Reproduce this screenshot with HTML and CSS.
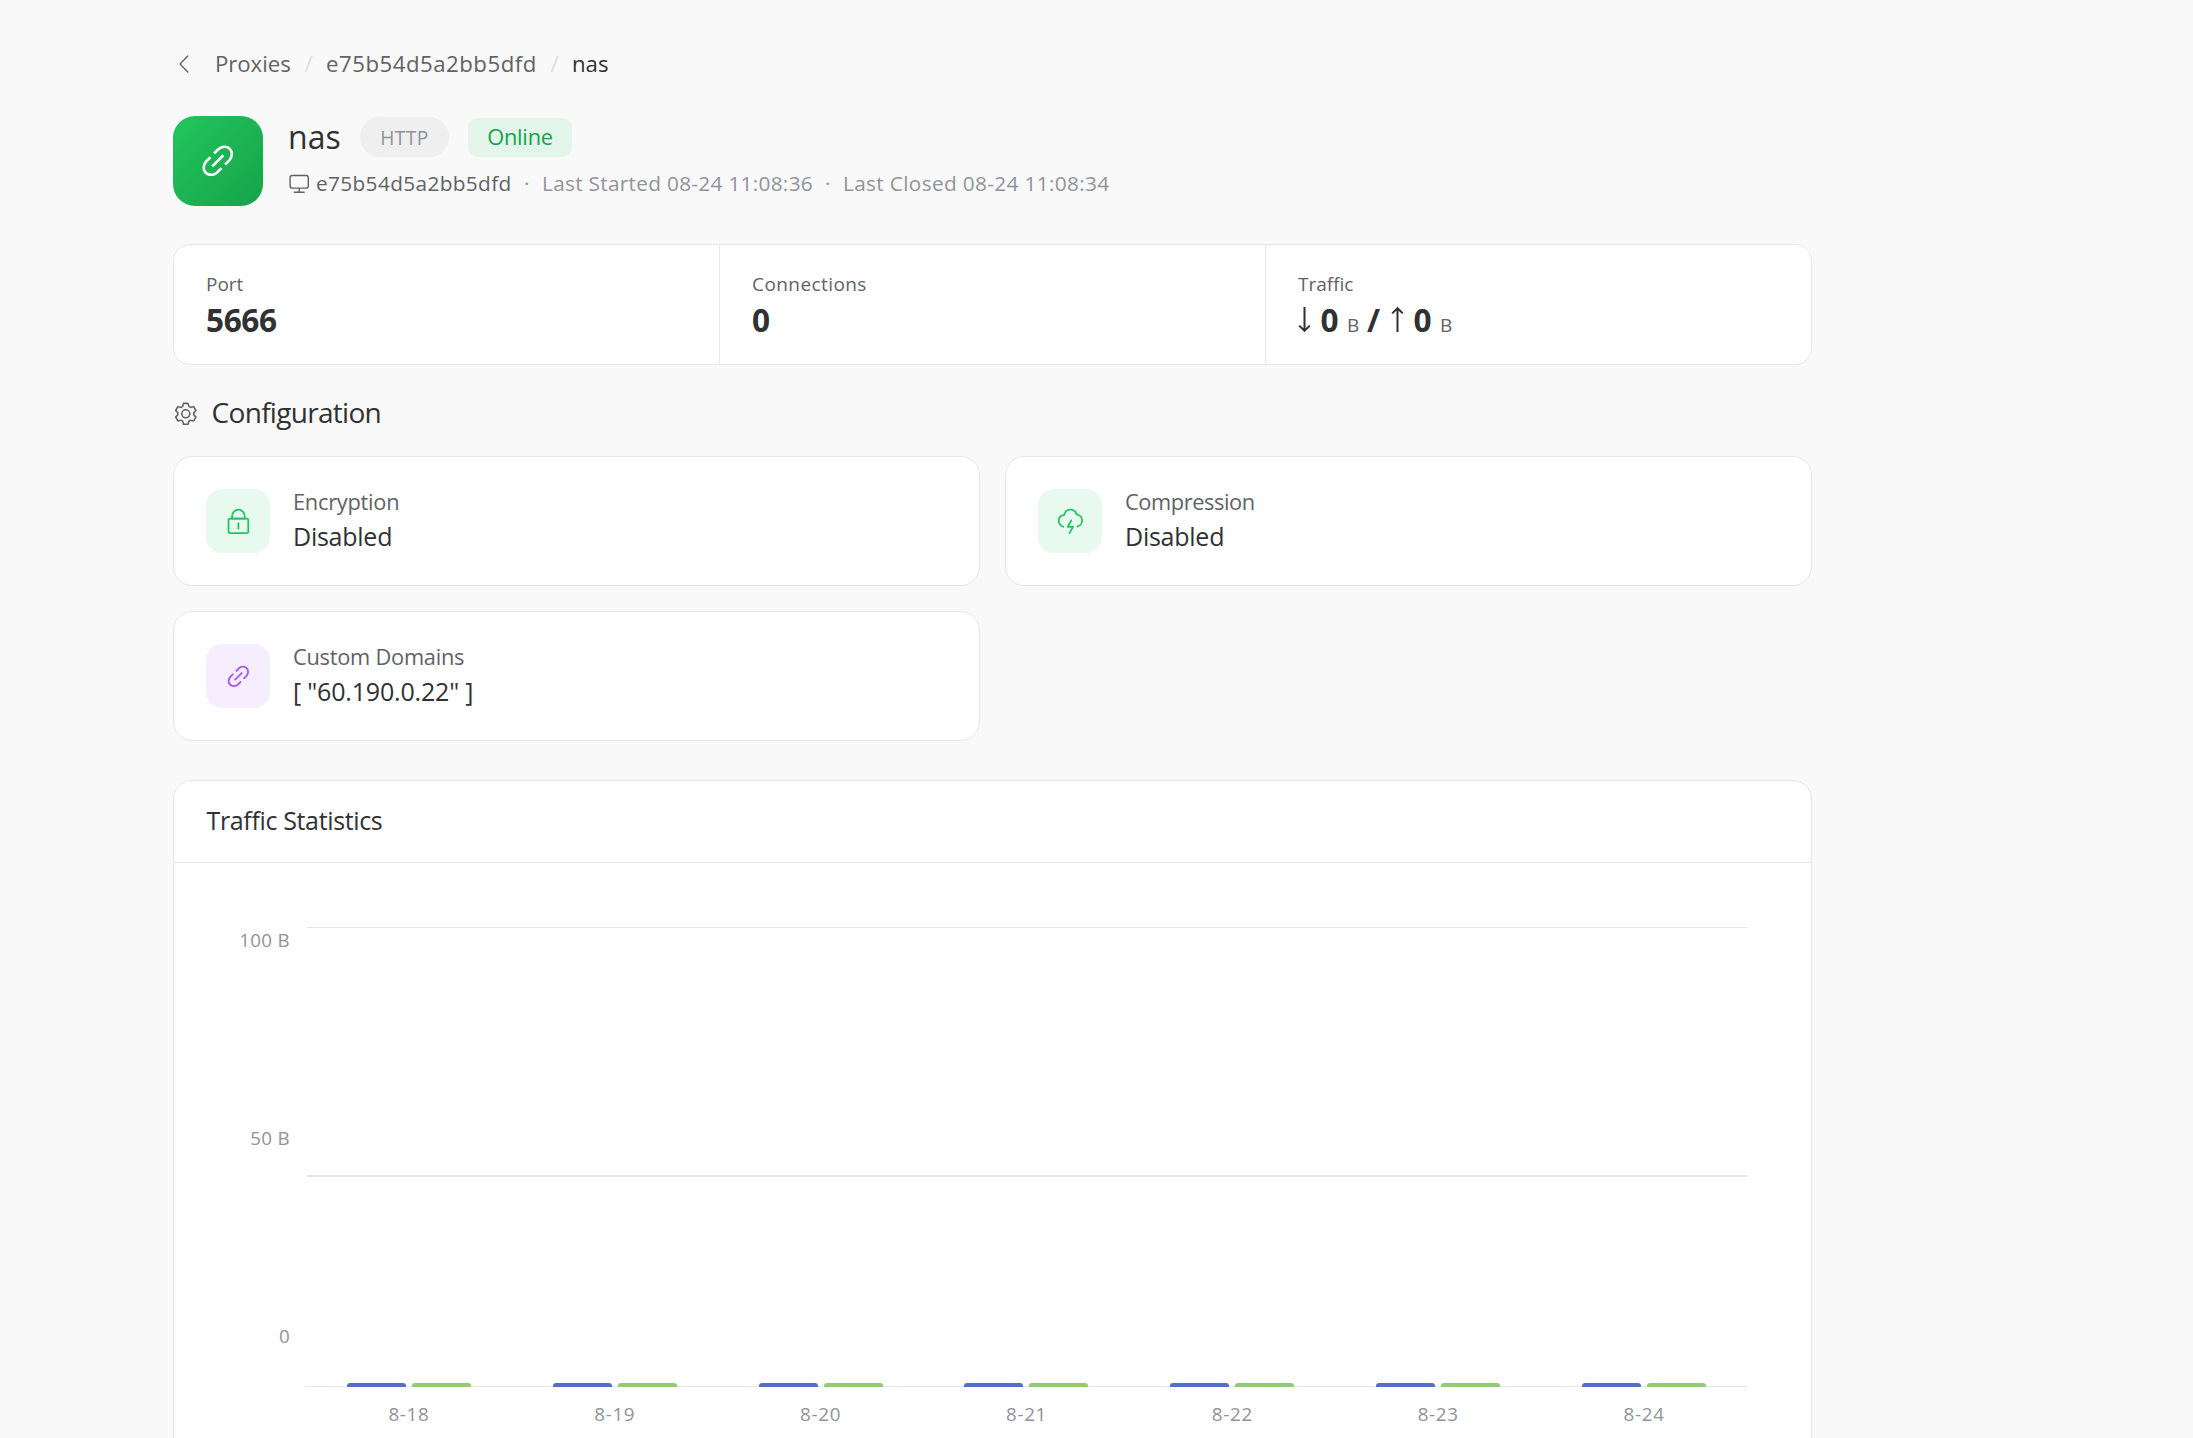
FILE: index.html
```html
<!DOCTYPE html>
<html lang="en">
<head>
<meta charset="utf-8">
<title>nas</title>
<link rel="stylesheet" href="styles.css">
</head>
<body>
<svg class="sprite" width="0" height="0">
  <symbol id="link" viewBox="0 0 1024 1024"><path d="M715.648 625.152 670.4 579.904l90.496-90.56c75.008-74.944 85.12-186.368 22.656-248.896-62.528-62.464-173.952-52.352-248.96 22.656L444.16 353.6l-45.248-45.248 90.496-90.496c100.032-99.968 251.968-110.08 339.456-22.656 87.488 87.488 77.312 239.424-22.656 339.456l-90.496 90.496zm-90.496 90.496-90.496 90.496C434.624 906.112 282.688 916.224 195.2 828.8c-87.488-87.488-77.312-239.424 22.656-339.456l90.496-90.496 45.248 45.248-90.496 90.56c-75.008 74.944-85.12 186.368-22.656 248.896 62.528 62.464 173.952 52.352 248.96-22.656l90.496-90.496zm0-362.048 45.248 45.248L398.848 670.4 353.6 625.152z"/></symbol>
</svg>
<main class="page">
  <nav class="crumbs">
    <svg class="back" viewBox="0 0 1024 1024"><path d="M609.408 149.376 277.76 489.6a32 32 0 0 0 0 44.672l331.648 340.352a29.12 29.12 0 0 0 41.728 0 30.592 30.592 0 0 0 0-42.752L339.264 511.936l311.872-319.872a30.592 30.592 0 0 0 0-42.688 29.12 29.12 0 0 0-41.728 0"/></svg>
    <a class="crumb-root">Proxies</a>
    <span class="slash">/</span>
    <a class="crumb-id">e75b54d5a2bb5dfd</a>
    <span class="slash">/</span>
    <span class="current">nas</span>
  </nav>

  <header class="hero">
    <div class="hero-icon"><svg viewBox="0 0 1024 1024"><use href="#link"/></svg></div>
    <div class="hero-body">
      <div class="title-row">
        <h1>nas</h1>
        <span class="type">HTTP</span>
        <span class="status">Online</span>
      </div>
      <div class="meta">
        <svg viewBox="0 0 1024 1024"><path d="M544 768v128h192a32 32 0 1 1 0 64H288a32 32 0 1 1 0-64h192V768H192A128 128 0 0 1 64 640V256a128 128 0 0 1 128-128h640a128 128 0 0 1 128 128v384a128 128 0 0 1-128 128zM192 192a64 64 0 0 0-64 64v384a64 64 0 0 0 64 64h640a64 64 0 0 0 64-64V256a64 64 0 0 0-64-64z"/></svg>
        <span class="client">e75b54d5a2bb5dfd</span>
        <span class="dot">·</span>
        <span class="started">Last Started 08-24 11:08:36</span>
        <span class="dot">·</span>
        <span class="closed">Last Closed 08-24 11:08:34</span>
      </div>
    </div>
  </header>

  <section class="stats">
    <div class="stat"><div class="label">Port</div><div class="value">5666</div></div>
    <div class="stat"><div class="label connections">Connections</div><div class="value">0</div></div>
    <div class="stat"><div class="label">Traffic</div>
      <div class="value traffic">
        <svg class="arrow" viewBox="0 0 13 25"><path d="M6.5 0V23.6M1.2 18.6 6.5 23.8 11.8 18.6"/></svg>
        <span class="num">0</span><span class="unit">B</span><span class="sep">/</span>
        <svg class="arrow" viewBox="0 0 13 25"><path d="M6.5 25V1.4M1.2 6.4 6.5 1.2 11.8 6.4"/></svg>
        <span class="num">0</span><span class="unit">B</span>
      </div>
    </div>
  </section>

  <h2 class="section-title">
    <svg viewBox="0 0 1024 1024"><path d="M600.704 64a32 32 0 0 1 30.464 22.208l35.2 109.376c14.784 7.232 28.928 15.36 42.432 24.512l112.384-24.192a32 32 0 0 1 34.432 15.36L944.32 364.8a32 32 0 0 1-4.032 37.504l-77.12 85.12a357.12 357.12 0 0 1 0 49.024l77.12 85.248a32 32 0 0 1 4.032 37.504l-88.704 153.6a32 32 0 0 1-34.432 15.296L708.8 803.904c-13.44 9.088-27.648 17.28-42.368 24.512l-35.264 109.376A32 32 0 0 1 600.704 960H423.296a32 32 0 0 1-30.464-22.208L357.696 828.48a351.616 351.616 0 0 1-42.56-24.64l-112.32 24.256a32 32 0 0 1-34.432-15.36L79.68 659.2a32 32 0 0 1 4.032-37.504l77.12-85.248a357.12 357.12 0 0 1 0-48.896l-77.12-85.248A32 32 0 0 1 79.68 364.8l88.704-153.6a32 32 0 0 1 34.432-15.296l112.32 24.256c13.568-9.152 27.776-17.408 42.56-24.64l35.2-109.312A32 32 0 0 1 423.232 64H600.64zm-23.424 64H446.72l-36.352 113.088-24.512 11.968a294.113 294.113 0 0 0-34.816 20.096l-22.656 15.36-116.224-25.088-65.28 113.152 79.68 88.192-1.92 27.136a293.12 293.12 0 0 0 0 40.192l1.92 27.136-79.808 88.192 65.344 113.152 116.224-25.024 22.656 15.296a294.113 294.113 0 0 0 34.816 20.096l24.512 11.968L446.72 896h130.688l36.48-113.152 24.448-11.904a288.282 288.282 0 0 0 34.752-20.096l22.592-15.296 116.288 25.024 65.28-113.152-79.744-88.192 1.92-27.136a293.12 293.12 0 0 0 0-40.256l-1.92-27.136 79.808-88.128-65.344-113.152-116.288 24.96-22.592-15.232a287.616 287.616 0 0 0-34.752-20.096l-24.448-11.904L577.344 128zM512 320a192 192 0 1 1 0 384 192 192 0 0 1 0-384m0 64a128 128 0 1 0 0 256 128 128 0 0 0 0-256"/></svg>
    <span>Configuration</span>
  </h2>

  <section class="configs">
    <div class="config">
      <div class="tile green"><svg viewBox="0 0 1024 1024"><path d="M224 448a32 32 0 0 0-32 32v384a32 32 0 0 0 32 32h576a32 32 0 0 0 32-32V480a32 32 0 0 0-32-32zm0-64h576a96 96 0 0 1 96 96v384a96 96 0 0 1-96 96H224a96 96 0 0 1-96-96V480a96 96 0 0 1 96-96"/><path d="M512 544a32 32 0 0 1 32 32v192a32 32 0 1 1-64 0V576a32 32 0 0 1 32-32m192-160v-64a192 192 0 1 0-384 0v64zM512 64a256 256 0 0 1 256 256v128H256V320A256 256 0 0 1 512 64"/></svg></div>
      <div class="text"><div class="name">Encryption</div><div class="setting">Disabled</div></div>
    </div>
    <div class="config">
      <div class="tile green"><svg viewBox="0 0 1024 1024"><path d="M288 671.36v64.128A239.808 239.808 0 0 1 63.744 496.192a240.32 240.32 0 0 1 199.488-236.8 256.128 256.128 0 0 1 487.872-30.976A256.064 256.064 0 0 1 736 734.016v-64.768a192 192 0 0 0 3.328-377.92l-35.2-6.592-12.8-33.408a192.064 192.064 0 0 0-365.952 23.232l-9.92 40.896-41.472 7.04a176.32 176.32 0 0 0-146.24 173.568c0 91.968 70.464 167.36 160.256 175.232z"/><path d="M416 736a32 32 0 0 1-27.776-47.872l128-224a32 32 0 1 1 55.552 31.744L471.168 672H608a32 32 0 0 1 27.776 47.872l-128 224a32 32 0 1 1-55.68-31.744L552.96 736z"/></svg></div>
      <div class="text"><div class="name compression">Compression</div><div class="setting">Disabled</div></div>
    </div>
    <div class="config">
      <div class="tile purple"><svg viewBox="0 0 1024 1024"><use href="#link"/></svg></div>
      <div class="text"><div class="name">Custom Domains</div><div class="setting domains">[ "60.190.0.22" ]</div></div>
    </div>
  </section>

  <section class="chart-card">
    <h3>Traffic Statistics</h3>
    <div class="chart">
      <div class="y-axis"><span>100 B</span><span>50 B</span><span>0</span></div>
      <div class="plot">
        <div class="grid">
          <div class="band upper"></div>
          <div class="band lower">
            <div class="day"><i class="in"></i><i class="out"></i></div>
            <div class="day"><i class="in"></i><i class="out"></i></div>
            <div class="day"><i class="in"></i><i class="out"></i></div>
            <div class="day"><i class="in"></i><i class="out"></i></div>
            <div class="day"><i class="in"></i><i class="out"></i></div>
            <div class="day"><i class="in"></i><i class="out"></i></div>
            <div class="day"><i class="in"></i><i class="out"></i></div>
          </div>
        </div>
        <div class="x-axis"><span>8-18</span><span>8-19</span><span>8-20</span><span>8-21</span><span>8-22</span><span>8-23</span><span>8-24</span></div>
      </div>
    </div>
  </section>
</main>
</body>
</html>
```
FILE: styles.css
```css
* { box-sizing: border-box; }
html, body { height: 100%; }
body {
  margin: 0;
  overflow: hidden;
  background: #f9f9f9;
  color: #303133;
  font-family: "Open Sans", "Noto Sans", sans-serif;
  letter-spacing: -0.3px;
}
svg { display: block; flex: none; fill: currentColor; }
.sprite { position: absolute; }
h1, h2, h3 { margin: 0; font-weight: 400; }

.page { width: 1812px; padding: 48px 0 0 173px; }

.crumbs { display: flex; align-items: center; height: 32px; font-size: 22.2px; color: #606266; white-space: nowrap; }
.crumbs > :not(svg) { line-height: 32px; }
.back { width: 24px; height: 24px; margin-right: 18px; }
.crumb-root { width: 76px; letter-spacing: -0.05px; }
.slash { width: 35px; text-align: center; color: #dcdfe6; }
.crumb-id { width: 211px; letter-spacing: 0.52px; }
.current { color: #303133; letter-spacing: 0; }

.hero { display: flex; gap: 25px; margin-top: 36px; height: 90px; }
.hero-icon {
  display: grid; place-items: center;
  width: 90px; height: 90px; border-radius: 22px;
  background: linear-gradient(135deg, #22c55e, #16a34a);
  color: #fff;
}
.hero-icon svg { width: 41.6px; height: 41.6px; }
.title-row { display: flex; align-items: center; height: 42px; }
h1 { width: 72px; padding-bottom: 1px; font-size: 32px; line-height: 40px; letter-spacing: 0; }
.type {
  width: 89px; height: 40px; margin-right: 19px; border-radius: 20px;
  background: #efeff0; color: #909399;
  font-size: 19.2px; line-height: 41px; text-align: center; letter-spacing: 0.4px;
}
.status {
  width: 104px; height: 39px; border-radius: 9.6px;
  background: #e3f4ea; color: #16a34a;
  font-size: 21.8px; line-height: 38px; text-align: center; letter-spacing: -0.2px;
}
.meta { display: flex; align-items: center; height: 50px; font-size: 20.8px; color: #909399; white-space: nowrap; }
.meta > span { line-height: 28px; }
.meta svg { width: 22.4px; height: 22.4px; margin: 0 6px 0 -0.4px; }
.meta svg, .client { color: #606266; }
.client { width: 195px; letter-spacing: 0.36px; }
.dot { width: 31px; text-align: center; }
.started { width: 270px; letter-spacing: 0.29px; }
.closed { letter-spacing: 0.34px; }

.stats {
  display: grid; grid-template-columns: 545px 546px 1fr;
  height: 121px; margin-top: 38px;
  background: #fff; border: 1px solid #e4e7ed; border-radius: 16px;
}
.stat { padding: 26px 32px 0; }
.stat + .stat { border-left: 1px solid #e4e7ed; }
.label { font-size: 19px; line-height: 27px; letter-spacing: 0; color: #606266; }
.connections { letter-spacing: 0.42px; }
.value { font-size: 31.6px; line-height: 44px; font-weight: 700; letter-spacing: -0.4px; }
.traffic { display: flex; align-items: baseline; }
.arrow { width: 13px; height: 25px; margin-right: 9px; fill: none; stroke: currentColor; stroke-width: 2; }
.traffic .num { width: 27px; padding-left: 0.5px; }
.unit { width: 19px; font-size: 19px; font-weight: 400; color: #606266; }
.sep { width: 25px; padding-left: 1px; }

.section-title { display: flex; align-items: center; gap: 13px; height: 40px; margin-top: 29px; font-size: 28px; letter-spacing: -0.7px; }
.section-title svg { width: 25.6px; height: 25.6px; color: #606266; }
.section-title span { line-height: 37px; padding-bottom: 3px; }

.configs { display: grid; grid-template-columns: 1fr 1fr; grid-auto-rows: 130px; gap: 25px; margin-top: 22px; }
.config {
  display: flex; align-items: center; gap: 23px; padding: 0 32px;
  background: #fff; border: 1px solid #e4e7ed; border-radius: 19px;
}
.tile { display: grid; place-items: center; width: 64px; height: 64px; border-radius: 16px; }
.tile svg { width: 28.8px; height: 28.8px; }
.text { padding-bottom: 2px; }
.green { background: #e8f9ef; color: #22c55e; }
.purple { background: #f6eefe; color: #a855f7; }
.name { font-size: 21.8px; line-height: 32px; letter-spacing: -0.25px; color: #606266; }
.compression { letter-spacing: -0.42px; }
.setting { font-size: 25px; line-height: 36px; letter-spacing: -0.25px; }
.domains { letter-spacing: -0.18px; }

.chart-card {
  height: 720px; margin-top: 39px;
  background: #fff; border: 1px solid #e4e7ed; border-radius: 19px;
}
h3 { height: 82px; padding-left: 32.5px; border-bottom: 1px solid #e4e7ed; font-size: 25px; line-height: 79px; letter-spacing: -0.35px; }
.chart { display: flex; gap: 16px; padding: 64px 64px 0 64px; }
.y-axis { display: flex; flex-direction: column; justify-content: space-between; width: 52px; height: 422px; text-align: right; font-size: 18.8px; line-height: 26px; letter-spacing: 0.3px; color: #909399; white-space: nowrap; }
.plot { flex: 1; }
.grid { display: flex; flex-direction: column; height: 460px; border-top: 1px solid #e4e7ed; border-bottom: 1px solid #e4e7ed; }
.upper { height: 249px; border-bottom: 2px solid #e4e7ed; }
.lower { display: grid; grid-template-columns: repeat(7, 1fr); align-items: end; height: 210px; margin-bottom: -1px; }
.day { display: flex; justify-content: center; gap: 6px; height: 4px; }
.day i { width: 59px; height: 4px; border-radius: 3px 3px 0 0; }
.in { background: #5470c6; }
.out { background: #91cc75; }
.x-axis { display: grid; grid-template-columns: repeat(7, 1fr); margin-top: 13px; text-align: center; font-size: 18.8px; line-height: 28px; letter-spacing: 0.7px; color: #909399; }
```
